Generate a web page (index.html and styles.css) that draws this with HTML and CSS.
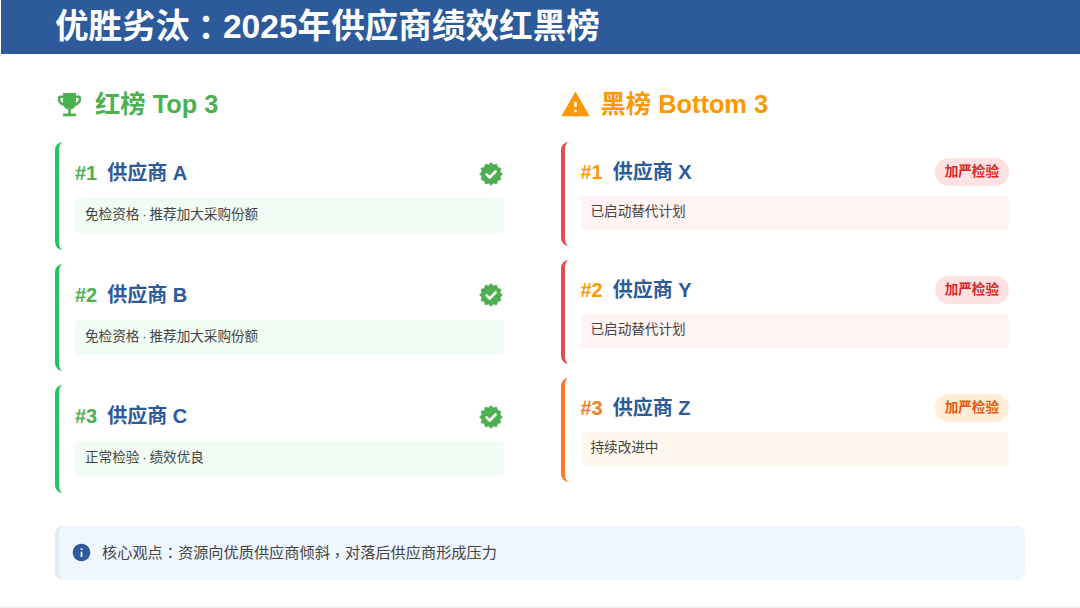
FILE: index.html
```html
<!DOCTYPE html>
<html lang="zh-CN">
<head>
<meta charset="utf-8">
<title>优胜劣汰</title>
<link rel="stylesheet" href="styles.css">
</head>
<body>
<svg class="defs" width="0" height="0" aria-hidden="true">
  <symbol id="badge" viewBox="0 0 24 24">
    <polygon class="badge-shape" points="23.4,12 20.9,14.38 21.87,17.7 18.5,18.5 17.7,21.87 14.38,20.9 12,23.4 9.62,20.9 6.3,21.87 5.5,18.5 2.13,17.7 3.1,14.38 .6,12 3.1,9.62 2.13,6.3 5.5,5.5 6.3,2.13 9.62,3.1 12,.6 14.38,3.1 17.7,2.13 18.5,5.5 21.87,6.3 20.9,9.62"/>
    <path class="badge-check" d="M7.6 12.4l3.1 3.1 5.9-6"/>
  </symbol>
</svg>
<div class="slide">
  <header class="banner"><h1>优胜劣汰<span class="colon" lang="zh-TW">：</span>2025年供应商绩效红黑榜</h1></header>
  <main class="content">
    <div class="columns">
      <section class="col">
        <h2 class="col-title green">
          <svg class="head-icon" viewBox="0 0 24 24"><path fill="currentColor" d="M19 5h-2V3H7v2H5c-1.1 0-2 .9-2 2v1c0 2.55 1.92 4.63 4.39 4.94.63 1.5 1.98 2.63 3.61 2.96V19H7v2h10v-2h-4v-3.1c1.63-.33 2.98-1.46 3.61-2.96C19.08 12.63 21 10.55 21 8V7c0-1.1-.9-2-2-2zM5 8V7h2v3.82C5.84 10.4 5 9.3 5 8zm14 0c0 1.3-.84 2.4-2 2.82V7h2v1z"/></svg>
          <span>红榜 Top 3</span>
        </h2>
        <div class="cards">
          <article class="card card-good">
            <div class="row row-good"><div class="name"><span class="rank green">#1</span><span>供应商 A</span></div><svg class="badge"><use href="#badge"/></svg></div>
            <p class="note note-good">免检资格 · 推荐加大采购份额</p>
          </article>
          <article class="card card-good">
            <div class="row row-good"><div class="name"><span class="rank green">#2</span><span>供应商 B</span></div><svg class="badge"><use href="#badge"/></svg></div>
            <p class="note note-good">免检资格 · 推荐加大采购份额</p>
          </article>
          <article class="card card-good">
            <div class="row row-good"><div class="name"><span class="rank green">#3</span><span>供应商 C</span></div><svg class="badge"><use href="#badge"/></svg></div>
            <p class="note note-good">正常检验 · 绩效优良</p>
          </article>
        </div>
      </section>
      <section class="col">
        <h2 class="col-title amber">
          <svg class="head-icon" viewBox="0 0 24 24"><path fill="currentColor" d="M1 21h22L12 2 1 21zm12-3h-2v-2h2v2zm0-4h-2v-4h2v4z"/></svg>
          <span>黑榜 Bottom 3</span>
        </h2>
        <div class="cards">
          <article class="card card-red">
            <div class="row"><div class="name"><span class="rank amber">#1</span><span>供应商 X</span></div><span class="pill pill-red">加严检验</span></div>
            <p class="note note-red">已启动替代计划</p>
          </article>
          <article class="card card-red">
            <div class="row"><div class="name"><span class="rank amber">#2</span><span>供应商 Y</span></div><span class="pill pill-red">加严检验</span></div>
            <p class="note note-red">已启动替代计划</p>
          </article>
          <article class="card card-orange">
            <div class="row"><div class="name"><span class="rank deep">#3</span><span>供应商 Z</span></div><span class="pill pill-orange">加严检验</span></div>
            <p class="note note-orange">持续改进中</p>
          </article>
        </div>
      </section>
    </div>
    <aside class="insight">
      <svg class="info" viewBox="0 0 24 24"><path fill="currentColor" d="M12 2C6.48 2 2 6.48 2 12s4.48 10 10 10 10-4.48 10-10S17.52 2 12 2zm1 15h-2v-6h2v6zm0-8h-2V7h2v2z"/></svg>
      <span>核心观点<span lang="zh-TW">：</span>资源向优质供应商倾斜<span class="comma" lang="zh-TW">，</span>对落后供应商形成压力</span>
    </aside>
  </main>
</div>
</body>
</html>
```
FILE: styles.css
```css
* { box-sizing: border-box; margin: 0; padding: 0; }
html, body { width: 1080px; height: 608px; overflow: hidden; background: #fff; }
body { font-family: "Liberation Sans", "Noto Sans CJK SC", sans-serif; }
.defs { display: block; height: 0; }
.slide { height: 608px; border-bottom: 1px solid #eceef1; display: flex; flex-direction: column; }
.banner { height: 54px; margin-left: 1px; background: #2c5a9a; padding-left: 54px; display: flex; align-items: center; }
.banner h1 { font-size: 33.6px; line-height: 54px; font-weight: 700; color: #fff; white-space: nowrap; }
.colon { vertical-align: -2px; line-height: 0; }
.comma { vertical-align: -3px; line-height: 0; }
.content { padding: 32px 55px 0; }
.columns { display: grid; grid-template-columns: 1fr 1fr; gap: 41px; }
.col-title { display: flex; align-items: center; gap: 10px; height: 36px; margin-bottom: 20px; font-size: 25.35px; line-height: 36px; font-weight: 700; }
.head-icon { display: block; flex: none; width: 31px; height: 31px; margin-left: -1px; }
.green { color: #4caf50; }
.amber { color: #ff9800; }
.deep { color: #f57c2a; }
.cards { display: flex; flex-direction: column; gap: 14px; }
.card { border-left: 4px solid; border-radius: 8px; padding: 16px; }
.card-good { border-color: #22c55e; height: 107.5px; }
.card-red { border-color: #e24f4f; height: 104px; }
.card-orange { border-color: #f57c2a; height: 104px; }
.row { display: flex; justify-content: space-between; align-items: center; height: 28px; margin-bottom: 9.5px; }
.row-good { height: 30px; margin-bottom: 10px; }
.name { display: flex; align-items: center; font-size: 20px; line-height: 28px; font-weight: 700; color: #2c5a9a; }
.rank { margin-right: 10px; }
.badge { width: 24px; height: 24px; margin: 1px 1px 0 0; display: block; }
.badge-shape { fill: #4caf50; stroke: #4caf50; stroke-width: .8; stroke-linejoin: round; }
.badge-check { fill: none; stroke: #fff; stroke-width: 2.6; stroke-linecap: round; stroke-linejoin: round; }
.pill { height: 28px; padding: 0 10px; border-radius: 14px; font-size: 13.6px; font-weight: 700; line-height: 28px; }
.pill-red { background: #fee2e2; color: #dc2626; }
.pill-orange { background: #ffedd5; color: #ea580c; }
.note { height: 34px; padding: 0 10px; border-radius: 4px; font-size: 13.6px; line-height: 32px; color: #444; word-spacing: -1px; }
.note-good { background: #f1fcf5; height: 35px; line-height: 34px; }
.note-red { background: #fff3f4; }
.note-orange { background: #fef8ef; }
.insight { margin-top: 33px; height: 54px; display: flex; align-items: center; gap: 10px; background: #eff6ff; border-left: 4px solid #e2e8f0; border-radius: 8px; padding-left: 12px; font-size: 15.2px; line-height: 52px; color: #444; }
.info { width: 21px; height: 21px; color: #2c5a9a; flex: none; }
```
